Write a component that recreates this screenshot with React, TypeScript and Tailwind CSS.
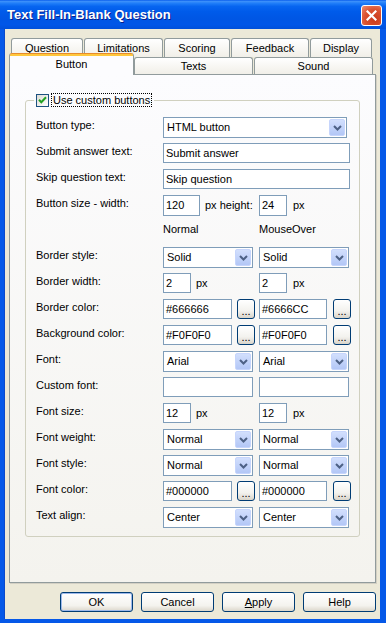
import React from 'react';

type Kids = { children?: React.ReactNode };

function Combo({ value, w }: { value: string; w: string }) {
  return (
    <div className={`flex h-[21px] items-center border border-[#7F9DB9] bg-white p-[1px] ${w}`}>
      <span className="flex-1 truncate pl-[2px] leading-[17px]">{value}</span>
      <span className="flex h-[17px] w-[16px] shrink-0 items-center justify-center rounded-[2px] border border-[#C6D5FC] bg-[linear-gradient(#D2DFFD,#B3C7F6)]">
        <svg width="9" height="6" viewBox="0 0 9 6">
          <path d="M1 1l3.5 3.5L8 1" fill="none" stroke="#4D6185" strokeWidth="2" />
        </svg>
      </span>
    </div>
  );
}

function Text({ value = '', w, h = 'h-[20px]' }: { value?: string; w: string; h?: string }) {
  return (
    <div className={`border border-[#7F9DB9] bg-white pl-[2px] leading-[18px] ${w} ${h}`}>{value}</div>
  );
}

function Dots({ ml }: { ml: string }) {
  return (
    <div
      className={`flex h-[20px] w-[18px] items-end justify-center rounded-[3px] border border-[#003C74] bg-[linear-gradient(#FFFFFF,#F3F2EE_60%,#D9D4C9)] pb-[3px] leading-[8px] ${ml}`}
    >
      ...
    </div>
  );
}

function Row({ label, children }: { label?: string } & Kids) {
  return (
    <div className="flex h-[26px] items-start">
      <div className="w-[127px] leading-[16px]">{label}</div>
      <div className="flex items-start">{children}</div>
    </div>
  );
}

function Cell({ children }: Kids) {
  return <div className="flex w-[96px] items-center">{children}</div>;
}

function Cell2({ children }: Kids) {
  return <div className="flex items-center">{children}</div>;
}

function Btn({ children, def }: Kids & { def?: boolean }) {
  return (
    <div
      className={`flex h-[20px] w-[73px] items-center justify-center rounded-[3px] border border-[#003C74] bg-[linear-gradient(#FFFFFF,#F4F3EE_70%,#DCD7CB)] ${
        def ? 'shadow-[inset_0_0_0_1px_#9DB9EB]' : ''
      }`}
    >
      {children}
    </div>
  );
}

const tab =
  'flex items-center justify-center rounded-t-[3px] border border-b-0 border-[#919B9C] bg-[linear-gradient(#FFFFFF,#F1EFE8)]';

export default function App() {
  return (
    <div className="flex h-[623px] w-[386px] flex-col bg-[#0558E8] font-['Liberation_Sans',Arial,sans-serif] text-[11px] text-black">
      {/* title bar */}
      <div className="flex h-[29px] shrink-0 items-start bg-[linear-gradient(180deg,#0A5DEC_0%,#3B8FFA_5%,#1E7CF8_12%,#0765F0_22%,#005BEA_40%,#0056E4_65%,#0056E8_85%,#0050DA_100%)] pl-[7px] pr-[4px]">
        <div className="mt-[6px] flex-1 text-[13px] font-bold leading-[18px] text-white [text-shadow:1px_1px_0_#0A1E8C]">
          Text Fill-In-Blank Question
        </div>
        <div className="mt-[5px] flex h-[21px] w-[21px] items-center justify-center rounded-[3px] border border-white bg-[radial-gradient(circle_at_65%_70%,#C8381A,#DB5331_55%,#EE8E72)]">
          <svg width="11" height="11" viewBox="0 0 11 11">
            <path d="M1.5 1.5l8 8M9.5 1.5l-8 8" stroke="white" strokeWidth="2.2" strokeLinecap="square" />
          </svg>
        </div>
      </div>

      {/* client */}
      <div className="mb-[4px] ml-[4px] mr-[6px] flex-1 border-l border-[#0B4ACB] bg-[#ECE9D8] pl-[4px] pt-[9px]">
        <div className="w-[367px]">
          {/* back tab row */}
          <div className="flex h-[19px] gap-[1px] pl-[2px]">
            <div className={`${tab} w-[72px]`}>Question</div>
            <div className={`${tab} w-[79px]`}>Limitations</div>
            <div className={`${tab} w-[66px]`}>Scoring</div>
            <div className={`${tab} w-[78px]`}>Feedback</div>
            <div className={`${tab} w-[62px]`}>Display</div>
          </div>
          {/* front tab row */}
          <div className="relative z-10 -mt-[4px] flex h-[21px] items-end">
            <div className="-mb-[1px] flex h-[22px] w-[125px] flex-col rounded-t-[3px] border-x border-[#919B9C] bg-[#FCFCFE]">
              <div className="h-[3px] rounded-t-[2px] border-t border-[#E68B2C] bg-[#FFC73C]" />
              <div className="flex flex-1 items-center justify-center pb-[2px]">Button</div>
            </div>
            <div className={`${tab} h-[17px] w-[119px]`}>Texts</div>
            <div className={`${tab} ml-[1px] h-[17px] w-[119px]`}>Sound</div>
          </div>

          {/* panel */}
          <div className="h-[509px] border border-[#919B9C] bg-[linear-gradient(#FCFCFE,#F4F3EE)] shadow-[1px_1px_0_0_#D3D0C4] pl-[15px] pt-[18px]">
            <fieldset className="w-[335px] rounded-[3px] border border-[#D0D0BF] pb-[3px] pl-[8px] pt-[10px]">
              <legend className="px-[2px]">
                <span className="flex h-[14px] items-center">
                  <span className="flex h-[13px] w-[13px] items-center justify-center border border-[#1C5180] bg-[linear-gradient(135deg,#DCDBD5,#FFFFFF)]">
                    <svg width="9" height="8" viewBox="0 0 9 8">
                      <path d="M1 3.8l2.3 2.4L8 1.3" fill="none" stroke="#21A121" strokeWidth="2" />
                    </svg>
                  </span>
                  <span className="ml-[2px] border border-dotted border-black px-[1px] leading-[12px]">
                    Use custom buttons
                  </span>
                </span>
              </legend>
              <div className="pl-[2px]">
                <Row label="Button type:">
                  <Combo w="w-[184px]" value="HTML button" />
                </Row>
                <Row label="Submit answer text:">
                  <Text w="w-[187px]" value="Submit answer" />
                </Row>
                <Row label="Skip question text:">
                  <Text w="w-[187px]" value="Skip question" />
                </Row>
                <Row label="Button size - width:">
                  <Cell>
                    <Text w="w-[37px]" h="h-[21px]" value="120" />
                    <span className="ml-[5px]">px height:</span>
                  </Cell>
                  <Cell2>
                    <Text w="w-[28px]" h="h-[21px]" value="24" />
                    <span className="ml-[6px]">px</span>
                  </Cell2>
                </Row>
                <Row label="">
                  <Cell>
                    <span className="leading-[16px]">Normal</span>
                  </Cell>
                  <Cell2>
                    <span className="leading-[16px]">MouseOver</span>
                  </Cell2>
                </Row>
                <Row label="Border style:">
                  <Cell>
                    <Combo w="w-[90px]" value="Solid" />
                  </Cell>
                  <Cell2>
                    <Combo w="w-[90px]" value="Solid" />
                  </Cell2>
                </Row>
                <Row label="Border width:">
                  <Cell>
                    <Text w="w-[28px]" value="2" />
                    <span className="ml-[5px]">px</span>
                  </Cell>
                  <Cell2>
                    <Text w="w-[28px]" value="2" />
                    <span className="ml-[6px]">px</span>
                  </Cell2>
                </Row>
                <Row label="Border color:">
                  <Cell>
                    <Text w="w-[69px]" value="#666666" />
                    <Dots ml="ml-[5px]" />
                  </Cell>
                  <Cell2>
                    <Text w="w-[68px]" value="#6666CC" />
                    <Dots ml="ml-[6px]" />
                  </Cell2>
                </Row>
                <Row label="Background color:">
                  <Cell>
                    <Text w="w-[69px]" value="#F0F0F0" />
                    <Dots ml="ml-[5px]" />
                  </Cell>
                  <Cell2>
                    <Text w="w-[68px]" value="#F0F0F0" />
                    <Dots ml="ml-[6px]" />
                  </Cell2>
                </Row>
                <Row label="Font:">
                  <Cell>
                    <Combo w="w-[90px]" value="Arial" />
                  </Cell>
                  <Cell2>
                    <Combo w="w-[90px]" value="Arial" />
                  </Cell2>
                </Row>
                <Row label="Custom font:">
                  <Cell>
                    <Text w="w-[90px]" />
                  </Cell>
                  <Cell2>
                    <Text w="w-[90px]" />
                  </Cell2>
                </Row>
                <Row label="Font size:">
                  <Cell>
                    <Text w="w-[28px]" value="12" />
                    <span className="ml-[5px]">px</span>
                  </Cell>
                  <Cell2>
                    <Text w="w-[28px]" value="12" />
                    <span className="ml-[6px]">px</span>
                  </Cell2>
                </Row>
                <Row label="Font weight:">
                  <Cell>
                    <Combo w="w-[90px]" value="Normal" />
                  </Cell>
                  <Cell2>
                    <Combo w="w-[90px]" value="Normal" />
                  </Cell2>
                </Row>
                <Row label="Font style:">
                  <Cell>
                    <Combo w="w-[90px]" value="Normal" />
                  </Cell>
                  <Cell2>
                    <Combo w="w-[90px]" value="Normal" />
                  </Cell2>
                </Row>
                <Row label="Font color:">
                  <Cell>
                    <Text w="w-[69px]" value="#000000" />
                    <Dots ml="ml-[5px]" />
                  </Cell>
                  <Cell2>
                    <Text w="w-[68px]" value="#000000" />
                    <Dots ml="ml-[6px]" />
                  </Cell2>
                </Row>
                <Row label="Text align:">
                  <Cell>
                    <Combo w="w-[90px]" value="Center" />
                  </Cell>
                  <Cell2>
                    <Combo w="w-[90px]" value="Center" />
                  </Cell2>
                </Row>
              </div>
            </fieldset>
          </div>

          {/* dialog buttons */}
          <div className="mt-[9px] flex justify-end gap-[8px]">
            <Btn def>OK</Btn>
            <Btn>Cancel</Btn>
            <Btn>
              <span>
                <span className="underline">A</span>pply
              </span>
            </Btn>
            <Btn>Help</Btn>
          </div>
        </div>
      </div>
    </div>
  );
}
